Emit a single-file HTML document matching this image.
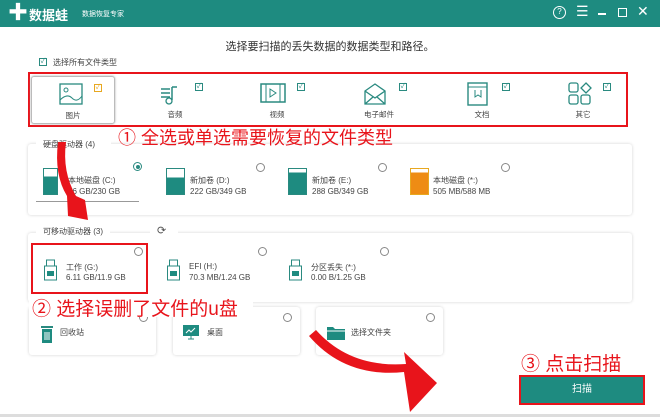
<!DOCTYPE html>
<html><head><meta charset="utf-8"><style>
*{margin:0;padding:0;box-sizing:border-box}
body{width:660px;height:417px;overflow:hidden;background:#fff;font-family:"Liberation Sans","Noto Sans CJK SC",sans-serif;position:relative;color:#333}
.a{position:absolute}
.t{font-size:8px;color:#444;white-space:nowrap}
.panel{position:absolute;background:#fff;border-radius:3px;box-shadow:0 0 3px rgba(0,0,0,.18)}
.radio{position:absolute;width:9px;height:9px;border:1px solid #888;border-radius:50%;background:#fff}
.cb{position:absolute;width:8px;height:8px;border:1px solid #2a8a80;font-size:7px;line-height:6px;text-align:center;color:#2a8a80}
.red{color:#e8141b;font-size:18px;white-space:nowrap;position:absolute}
.cat{position:absolute;top:76px;width:84px;height:48px;text-align:center;font-size:7.5px;color:#444}
.cat span{position:absolute;left:0;right:0;top:33px}
</style></head><body>
<div class="a" style="left:0;top:0;width:660px;height:27px;background:#1e8b80"></div>
<div class="a" style="left:8px;top:4px;width:18px;height:18px;color:#fff;font-size:20px;line-height:18px;font-weight:bold">✚</div>
<div class="a" style="left:29px;top:5px;color:#fff;font-size:13px;font-weight:bold">数据蛙</div>
<div class="a" style="left:82px;top:9px;color:#fff;font-size:7px">数据恢复专家</div>
<div class="a" style="left:553px;top:6px;width:13px;height:13px;border:1.5px solid #fff;border-radius:50%;color:#fff;font-size:8px;text-align:center;line-height:10px">?</div>
<div class="a" style="left:576px;top:3px;color:#fff;font-size:14px">☰</div>
<div class="a" style="left:598px;top:13px;width:8px;height:1.5px;background:#fff"></div>
<div class="a" style="left:618px;top:8px;width:9px;height:9px;border:1.5px solid #fff"></div>
<div class="a" style="left:637px;top:3px;color:#fff;font-size:14px">✕</div>

<div class="a" style="left:0;top:38px;width:660px;text-align:center;font-size:11px;color:#333">选择要扫描的丢失数据的数据类型和路径。</div>
<div class="cb" style="left:39px;top:58px">✓</div>
<div class="a t" style="left:53px;top:57px">选择所有文件类型</div>

<div class="a" style="left:28px;top:72px;width:600px;height:55px;border:2.5px solid #e8141b"></div>
<div class="cat" style="left:31px;border:1px solid #bbb;border-radius:3px;box-shadow:0 0 2px #aaa"><svg class="a" style="left:27px;top:6px" width="24" height="22"><rect x="1" y="1" width="22" height="20" fill="none" stroke="#2a8a80" stroke-width="1.3"/><circle cx="7" cy="7" r="2" fill="none" stroke="#2a8a80"/><path d="M1 17 Q8 10 13 15 T23 13" fill="none" stroke="#2a8a80"/></svg><div class="cb" style="left:62px;top:7px;border-color:#e8a820;color:#e8a820">✓</div><span>图片</span></div>
<div class="cat" style="left:133px"><svg class="a" style="left:26px;top:7px" width="24" height="24"><path d="M2 6h9M2 10h9M2 14h9M13 4v13M13 4h5" stroke="#2a8a80" stroke-width="1.5" fill="none"/><circle cx="10" cy="18" r="3" fill="none" stroke="#2a8a80" stroke-width="1.3"/></svg><div class="cb" style="left:62px;top:7px">✓</div><span>音频</span></div>
<div class="cat" style="left:235px"><svg class="a" style="left:25px;top:6px" width="26" height="22"><rect x="1" y="2" width="24" height="18" fill="none" stroke="#2a8a80" stroke-width="1.5"/><path d="M6 2v18M20 2v18M10 7l6 4-6 4z" stroke="#2a8a80" fill="none"/></svg><div class="cb" style="left:62px;top:7px">✓</div><span>视频</span></div>
<div class="cat" style="left:337px"><svg class="a" style="left:26px;top:6px" width="24" height="24"><path d="M2 9l10-7 10 7v13H2zM2 9l10 7 10-7M2 22l8-7M22 22l-8-7" stroke="#2a8a80" stroke-width="1.3" fill="none"/></svg><div class="cb" style="left:62px;top:7px">✓</div><span>电子邮件</span></div>
<div class="cat" style="left:440px"><svg class="a" style="left:27px;top:6px" width="22" height="24"><rect x="1" y="1" width="19" height="22" fill="none" stroke="#2a8a80" stroke-width="1.4"/><path d="M1 5h19M8 8v7l3-2 3 2V8" stroke="#2a8a80" fill="none"/></svg><div class="cb" style="left:62px;top:7px">✓</div><span>文档</span></div>
<div class="cat" style="left:541px"><svg class="a" style="left:27px;top:6px" width="24" height="24"><rect x="1" y="1" width="9" height="9" rx="2" fill="none" stroke="#2a8a80" stroke-width="1.3"/><path d="M18 1l5 5-5 5-5-5z" fill="none" stroke="#2a8a80" stroke-width="1.3"/><rect x="1" y="13" width="9" height="9" rx="2" fill="none" stroke="#2a8a80" stroke-width="1.3"/><rect x="13" y="13" width="9" height="9" rx="2" fill="none" stroke="#2a8a80" stroke-width="1.3"/></svg><div class="cb" style="left:62px;top:7px">✓</div><span>其它</span></div>

<div class="panel" style="left:28px;top:144px;width:604px;height:71px"></div>
<div class="a" style="left:36px;top:138px;width:75px;height:14px;background:#fff"></div>
<div class="a t" style="left:43px;top:139px">硬盘驱动器 (4)</div>
<div class="red" style="left:118px;top:124px">① 全选或单选需要恢复的文件类型</div>

<div class="a" style="left:36px;top:201px;width:103px;height:1px;background:#999"></div>
<div class="radio" style="left:133px;top:162px;border-color:#2a8a80"></div><div class="a" style="left:135.5px;top:164.5px;width:4px;height:4px;border-radius:50%;background:#2a8a80"></div>
<div class="a" style="left:43px;top:168px;width:15px;height:27px;border:1px solid #2a8a80;background:linear-gradient(#fff 30%,#1e8b80 30%)"></div>
<div class="a t" style="left:68px;top:175px">本地磁盘 (C:)</div><div class="a t" style="left:68px;top:187px">76 GB/230 GB</div>

<div class="radio" style="left:256px;top:163px"></div>
<div class="a" style="left:166px;top:168px;width:19px;height:27px;border:1px solid #2a8a80;background:linear-gradient(#fff 35%,#1e8b80 35%)"></div>
<div class="a t" style="left:190px;top:175px">新加卷 (D:)</div><div class="a t" style="left:190px;top:187px">222 GB/349 GB</div>
<div class="radio" style="left:378px;top:163px"></div>
<div class="a" style="left:288px;top:168px;width:19px;height:27px;border:1px solid #2a8a80;background:linear-gradient(#fff 15%,#1e8b80 15%)"></div>
<div class="a t" style="left:312px;top:175px">新加卷 (E:)</div><div class="a t" style="left:312px;top:187px">288 GB/349 GB</div>
<div class="radio" style="left:501px;top:163px"></div>
<div class="a" style="left:410px;top:168px;width:19px;height:27px;border:1px solid #e8a820;background:linear-gradient(#fff 15%,#ee8c14 15%)"></div>
<div class="a t" style="left:433px;top:175px">本地磁盘 (*:)</div><div class="a t" style="left:433px;top:187px">505 MB/588 MB</div>

<div class="panel" style="left:28px;top:233px;width:604px;height:69px"></div>
<div class="a t" style="left:36px;top:226px;background:#fff;padding:0 7px">可移动驱动器 (3)</div>
<div class="a" style="left:150px;top:225px;width:28px;height:12px;background:#fff"></div>
<div class="a" style="left:157px;top:224px;font-size:11px;color:#555">⟳</div>
<div class="a" style="left:31px;top:243px;width:117px;height:51px;border:2.5px solid #e8141b;background:#fff"></div>
<div class="radio" style="left:134px;top:247px"></div><div class="radio" style="left:258px;top:247px"></div><div class="radio" style="left:380px;top:247px"></div>
<svg class="a" style="left:44px;top:259px" width="13" height="22"><rect x="2.5" y="1" width="8" height="6" fill="none" stroke="#2a8a80"/><rect x="0.5" y="7" width="12" height="14" fill="none" stroke="#2a8a80"/><rect x="3" y="12" width="7" height="5" fill="#1e8b80"/></svg>
<div class="a t" style="left:66px;top:262px">工作 (G:)</div><div class="a t" style="left:66px;top:273px">6.11 GB/11.9 GB</div>
<svg class="a" style="left:167px;top:259px" width="13" height="22"><rect x="2.5" y="1" width="8" height="6" fill="none" stroke="#2a8a80"/><rect x="0.5" y="7" width="12" height="14" fill="none" stroke="#2a8a80"/><rect x="3" y="12" width="7" height="5" fill="#1e8b80"/></svg>
<div class="a t" style="left:189px;top:262px">EFI (H:)</div><div class="a t" style="left:189px;top:273px">70.3 MB/1.24 GB</div>
<svg class="a" style="left:289px;top:259px" width="13" height="22"><rect x="2.5" y="1" width="8" height="6" fill="none" stroke="#2a8a80"/><rect x="0.5" y="7" width="12" height="14" fill="none" stroke="#2a8a80"/><rect x="3" y="12" width="7" height="5" fill="#1e8b80"/></svg>
<div class="a t" style="left:311px;top:262px">分区丢失 (*:)</div><div class="a t" style="left:311px;top:273px">0.00 B/1.25 GB</div>

<div class="panel" style="left:29px;top:307px;width:127px;height:48px"></div>
<div class="panel" style="left:173px;top:307px;width:127px;height:48px"></div>
<div class="panel" style="left:316px;top:307px;width:127px;height:48px"></div>
<div class="radio" style="left:139px;top:313px"></div><div class="radio" style="left:283px;top:313px"></div><div class="radio" style="left:426px;top:313px"></div>
<svg class="a" style="left:41px;top:325px" width="12" height="18"><rect x="0" y="1" width="12" height="2" fill="#2a8a80"/><rect x="1" y="4" width="10" height="14" fill="#1e8b80"/><path d="M4 7v8M6 7v8M8 7v8" stroke="#fff"/></svg>
<div class="a t" style="left:60px;top:327px">回收站</div>
<svg class="a" style="left:183px;top:325px" width="16" height="16"><rect x="0" y="0" width="16" height="11" fill="#1e8b80"/><path d="M3 8l3-3 2 2 4-4" stroke="#fff" fill="none"/><path d="M5 14h6M8 11v3" stroke="#2a8a80"/></svg>
<div class="a t" style="left:207px;top:327px">桌面</div>
<svg class="a" style="left:327px;top:326px" width="18" height="14"><path d="M0 1h6l2 2h10v11H0z" fill="#1e8b80"/><path d="M0 5h18" stroke="#fff"/></svg>
<div class="a t" style="left:351px;top:327px">选择文件夹</div>

<div class="a" style="left:29px;top:295px;width:224px;height:22px;background:#fff"></div>
<div class="red" style="left:32px;top:294px;font-size:19px">② 选择误删了文件的u盘</div>
<div class="red" style="left:521px;top:349px;font-size:19px">③ 点击扫描</div>
<div class="a" style="left:519px;top:375px;width:126px;height:30px;border:2.5px solid #e8141b;background:#1e8b80;color:#fff;font-size:10px;text-align:center;line-height:25px">扫描</div>
<div class="a" style="left:0;top:414px;width:660px;height:3px;background:#ddd"></div>

<svg class="a" style="left:0;top:0" width="660" height="417">
<path d="M58 142 Q54 175 67 196 L68 216 L88 220 L85 200 L76 196 Q62 172 66 142 Z" fill="#e8141b"/>
<path d="M309 336 Q345 378 404 372 L410 412 L437 383 L404 352 L406 364 Q350 368 316 330 Z" fill="#e8141b"/>
</svg>
</body></html>
